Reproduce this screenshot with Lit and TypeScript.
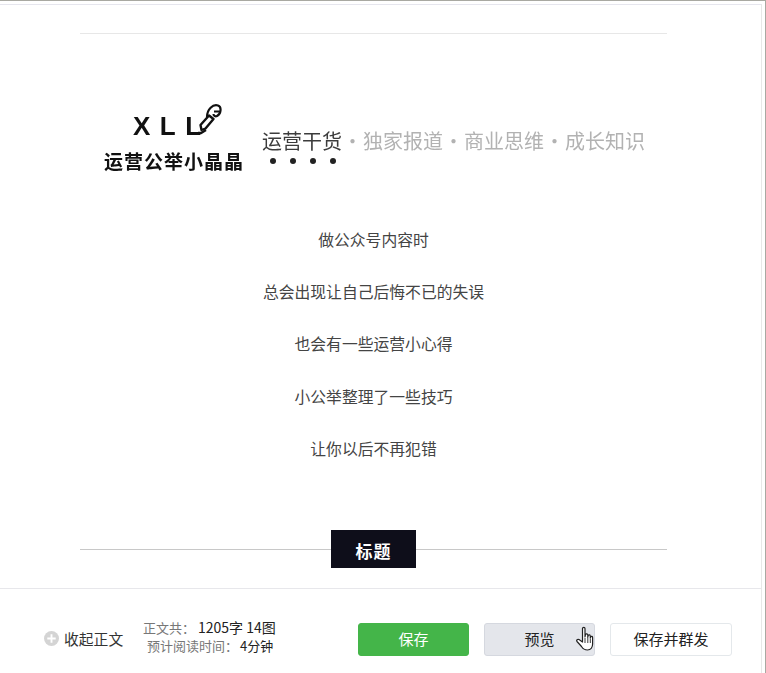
import { LitElement, html, css, svg } from "lit";
import { customElement } from "lit/decorators.js";

const lines = ["做公众号内容时", "总会出现让自己后悔不已的失误", "也会有一些运营小心得", "小公举整理了一些技巧", "让你以后不再犯错"];
const topics = ["独家报道", "商业思维", "成长知识"];

const pen = svg`<path d="M9 14 C9 6 15 1 20 2.5 C24 4 23 11 19 13 C17.5 13.8 15.5 13 15.5 11 M16 8.5 H21.5" fill="none" stroke="#111" stroke-width="2.2"/><path d="M3.5 27 L2.5 22 L11 12.5 L15.5 16 L7.5 25.5 Z" fill="#fff" stroke="#111" stroke-width="2.4" stroke-linejoin="round"/><path d="M0 30 H3 L8 27" fill="none" stroke="#111" stroke-width="2.4"/>`;

const hand = svg`<path d="M7.5 2.5 C7.5 1 10 1 10 2.5 V11 L10.5 8.5 C11 7.5 12.6 7.6 12.8 9 V11.5 L13.2 9.5 C13.8 8.6 15.2 8.8 15.3 10 V12 L15.8 10.8 C16.4 10 17.6 10.3 17.6 11.5 V18 C17.6 21 16 24 12.5 24 C9.5 24 8 23 6.5 20.5 L2 15.5 C1 14.3 2.5 12.7 4 13.6 L7.5 16 Z" fill="#fff" stroke="#222" stroke-width="1.2" stroke-linejoin="round"/><path d="M10 12 V17 M12.8 12 V17 M15.3 12.5 V17" stroke="#222" stroke-width="0.9" fill="none"/>`;

@customElement("app-root")
export class AppRoot extends LitElement {
  static styles = css`
    :host {
      display: block;
      box-sizing: border-box;
      width: 766px;
      height: 673px;
      background: #fff;
      border-top: 1px solid #a9a9a2;
      border-right: 1px solid #a9a9a2;
      padding-top: 3px;
      font-family: "Noto Sans CJK SC", "Liberation Sans", sans-serif;
      color: #333;
    }
    .frame {
      box-sizing: border-box;
      height: 669px;
      margin-right: 3px;
      border-top: 1px solid #e6e6ee;
      border-right: 1px solid #e8e8e8;
      display: flex;
      flex-direction: column;
    }
    .main {
      height: 583px;
      flex: none;
      padding-top: 28px;
      box-sizing: border-box;
    }
    .article {
      margin-left: 80px;
      width: 587px;
      border-top: 1px solid #e7e7e7;
      box-sizing: border-box;
    }
    .banner {
      display: flex;
      height: 78px;
      margin-top: 65px;
      padding-left: 24px;
      filter: blur(0.35px);
    }
    .brand {
      width: 158px;
      flex: none;
      position: relative;
    }
    .xll {
      height: 30px;
      margin: 12px 0 0 29px;
      font: 700 26px/30px "Liberation Sans", sans-serif;
      letter-spacing: 9.5px;
      color: #111;
    }
    .pen {
      position: absolute;
      left: 94px;
      top: 4px;
      width: 24px;
      height: 32px;
    }
    .brand-cn {
      margin-top: 9px;
      font-size: 19px;
      font-weight: 700;
      line-height: 22px;
      letter-spacing: 1px;
      color: #111;
      white-space: nowrap;
    }
    .slogan-wrap {
      padding-top: 27px;
    }
    .slogan {
      display: flex;
      font-size: 20px;
      line-height: 30px;
      color: #b2b2b2;
      white-space: nowrap;
    }
    .slogan b {
      font-weight: 400;
      color: #3c3c3c;
    }
    .slogan i {
      width: 21px;
      font-style: normal;
      text-align: center;
    }
    .dots {
      display: flex;
      gap: 14px;
      padding-left: 8px;
      margin-top: 2px;
    }
    .dots i {
      width: 6px;
      height: 6px;
      border-radius: 50%;
      background: #222;
    }
    .body {
      margin-top: 49.6px;
      display: flex;
      flex-direction: column;
      gap: 26.4px;
      align-items: center;
      font-size: 15.8px;
      line-height: 26px;
      color: #444;
    }
    .heading {
      margin-top: 67.8px;
      height: 38px;
      display: flex;
      align-items: center;
      justify-content: center;
      position: relative;
    }
    .heading::before {
      content: "";
      position: absolute;
      left: 0;
      right: 0;
      top: 19px;
      height: 1px;
      background: #c8c8c8;
    }
    .heading span {
      position: relative;
      width: 85px;
      height: 38px;
      background: #0e0e1a;
      color: #fff;
      font-size: 17px;
      font-weight: 700;
      line-height: 41px;
      letter-spacing: 1px;
      text-align: center;
    }
    .footer {
      flex: 1;
      border-top: 1px solid #e7e7eb;
      display: flex;
      align-items: flex-start;
      padding-left: 44px;
      padding-top: 34px;
      box-sizing: border-box;
    }
    .collapse {
      display: flex;
      align-items: center;
      gap: 5px;
      width: 99px;
      height: 31px;
      font-size: 14.8px;
      color: #333;
      flex: none;
    }
    .collapse svg {
      width: 15px;
      height: 15px;
      flex: none;
    }
    .stats {
      width: 215px;
      flex: none;
      font-size: 13px;
      line-height: 18px;
      color: #777;
      margin-top: -5px;
    }
    .stats div {
      white-space: nowrap;
    }
    .stats .b {
      color: #222;
      margin-left: 3px;
      font-size: 14px;
    }
    .stats .second {
      padding-left: 4px;
    }
    .stats .second .b {
      margin-left: 2px;
      font-size: 13px;
    }
    .btns {
      display: flex;
      gap: 15px;
    }
    .btn {
      box-sizing: border-box;
      width: 111px;
      height: 33px;
      border-radius: 3px;
      font-size: 15px;
      line-height: 29px;
      text-align: center;
      border: 1px solid #e4e8eb;
      color: #222;
      position: relative;
    }
    .save {
      background: #44b549;
      border-color: #44b549;
      color: #fff;
    }
    .preview {
      background: #e4e6eb;
      border-color: #d5d8df;
    }
    .send {
      width: 122px;
      background: #fff;
    }
    .cursor {
      position: absolute;
      left: 90px;
      top: 2px;
      width: 20px;
      height: 26px;
    }
  `;

  render() {
    return html`
      <div class="frame">
        <div class="main">
          <div class="article">
            <div class="banner">
              <div class="brand">
                <div class="xll">XLL</div>
                <svg class="pen" viewBox="0 0 24 32">${pen}</svg>
                <div class="brand-cn">运营公举小晶晶</div>
              </div>
              <div class="slogan-wrap">
                <div class="slogan">
                  <b>运营干货</b>
                  ${topics.map((t) => html`<i>·</i><span>${t}</span>`)}
                </div>
                <div class="dots"><i></i><i></i><i></i><i></i></div>
              </div>
            </div>
            <div class="body">${lines.map((l) => html`<div>${l}</div>`)}</div>
            <div class="heading"><span>标题</span></div>
          </div>
        </div>
        <div class="footer">
          <div class="collapse">
            <svg viewBox="0 0 16 16">
              <circle cx="8" cy="8" r="8" fill="#d4d4d4"></circle>
              <path d="M3.5 8 H12.5 M8 3.5 V12.5" stroke="#fff" stroke-width="2"></path>
            </svg>
            收起正文
          </div>
          <div class="stats">
            <div>正文共：<span class="b">1205字 14图</span></div>
            <div class="second">预计阅读时间：<span class="b">4分钟</span></div>
          </div>
          <div class="btns">
            <div class="btn save">保存</div>
            <div class="btn preview">
              预览
              <svg class="cursor" viewBox="0 0 20 26">${hand}</svg>
            </div>
            <div class="btn send">保存并群发</div>
          </div>
        </div>
      </div>
    `;
  }
}
